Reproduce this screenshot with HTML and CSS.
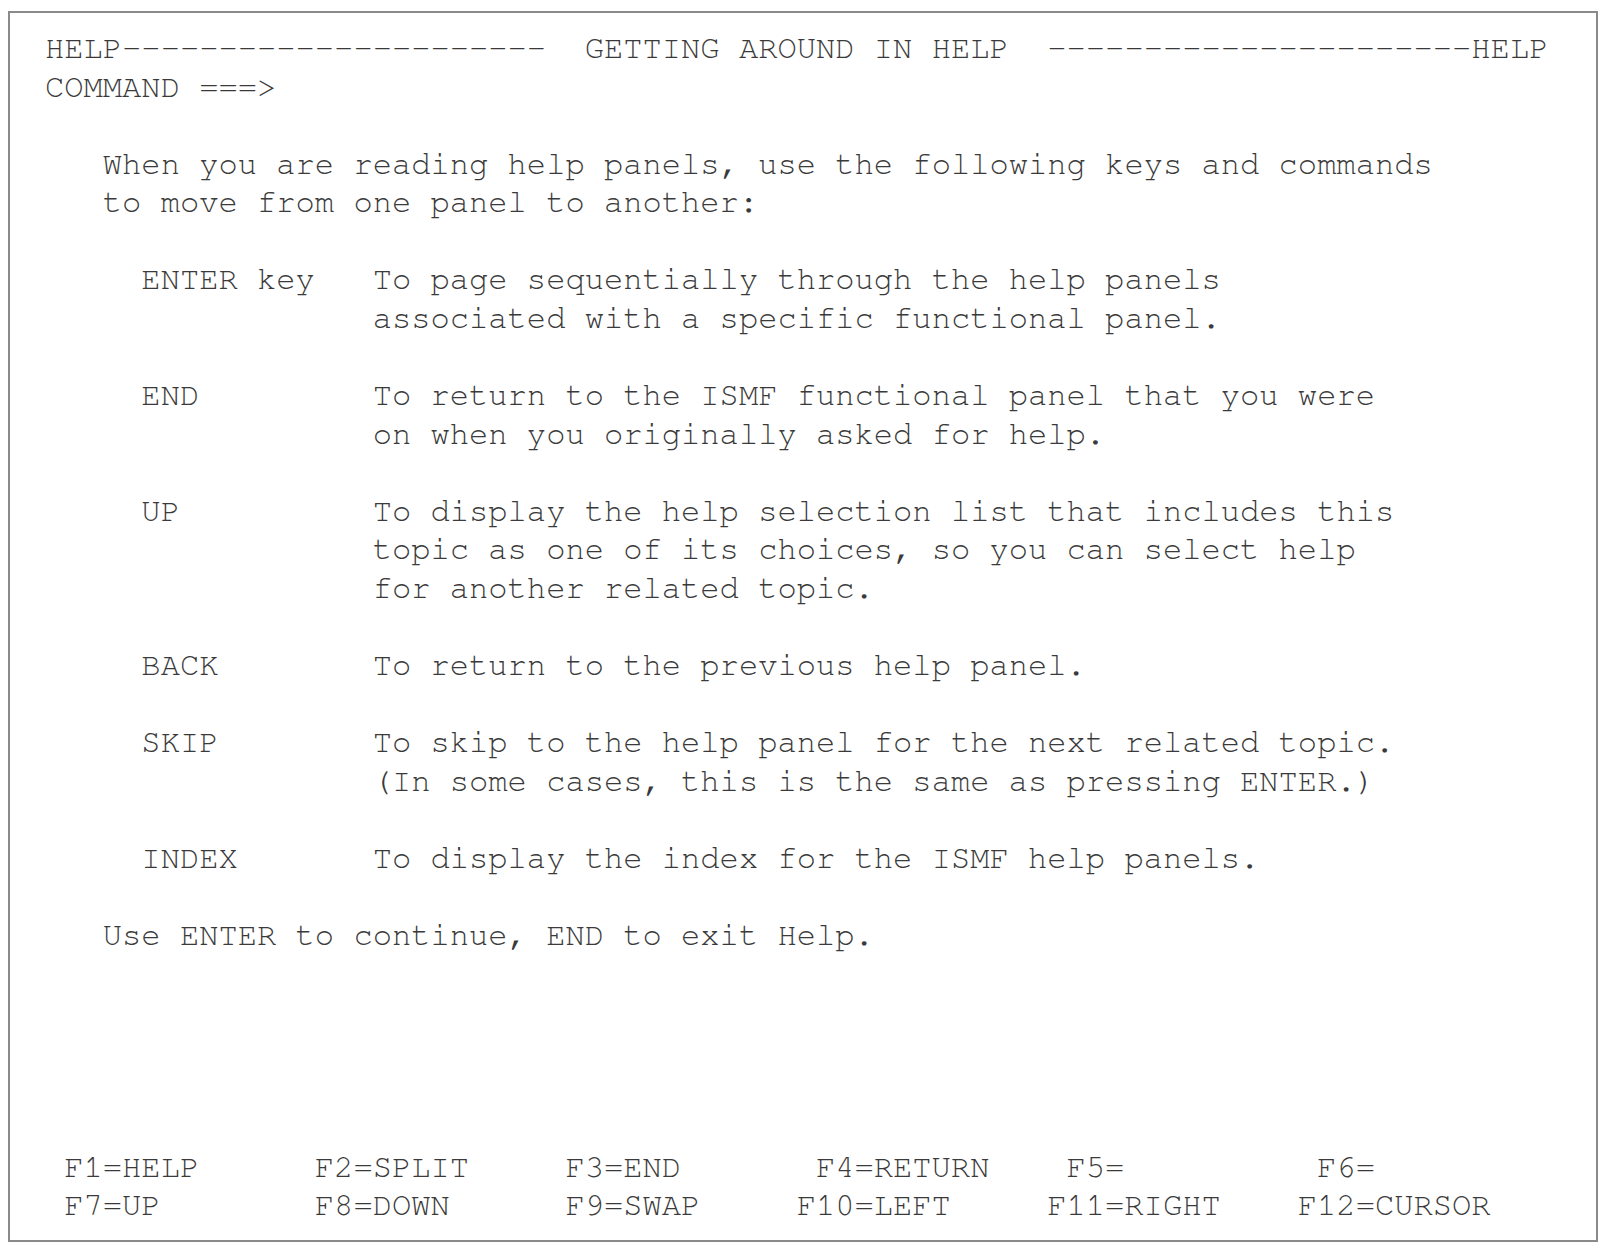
FILE: index.html
```html
<!DOCTYPE html>
<html lang="en">
<head>
<meta charset="utf-8">
<title>HELP - Getting Around in Help</title>
<link rel="stylesheet" href="styles.css">
</head>
<body>
<main class="screen">
  <div class="line">HELP----------------------  GETTING AROUND IN HELP  ----------------------HELP</div>
  <div class="line">COMMAND ===&gt;</div>
  <p class="intro">When you are reading help panels, use the following keys and commands<br>to move from one panel to another:</p>
  <dl class="keys">
    <div class="entry"><dt>ENTER key</dt><dd>To page sequentially through the help panels<br>associated with a specific functional panel.</dd></div>
    <div class="entry"><dt>END</dt><dd>To return to the ISMF functional panel that you were<br>on when you originally asked for help.</dd></div>
    <div class="entry"><dt>UP</dt><dd>To display the help selection list that includes this<br>topic as one of its choices, so you can select help<br>for another related topic.</dd></div>
    <div class="entry"><dt>BACK</dt><dd>To return to the previous help panel.</dd></div>
    <div class="entry"><dt>SKIP</dt><dd>To skip to the help panel for the next related topic.<br>(In some cases, this is the same as pressing ENTER.)</dd></div>
    <div class="entry"><dt>INDEX</dt><dd>To display the index for the ISMF help panels.</dd></div>
  </dl>
  <p class="intro note">Use ENTER to continue, END to exit Help.</p>
  <div class="fkeys">
    <div class="fk"><span class="k">F1</span>=HELP</div>
    <div class="fk"><span class="k">F2</span>=SPLIT</div>
    <div class="fk"><span class="k">F3</span>=END</div>
    <div class="fk"><span class="k">F4</span>=RETURN</div>
    <div class="fk"><span class="k">F5</span>=</div>
    <div class="fk"><span class="k">F6</span>=</div>
    <div class="fk"><span class="k">F7</span>=UP</div>
    <div class="fk"><span class="k">F8</span>=DOWN</div>
    <div class="fk"><span class="k">F9</span>=SWAP</div>
    <div class="fk"><span class="k">F10</span>=LEFT</div>
    <div class="fk"><span class="k">F11</span>=RIGHT</div>
    <div class="fk"><span class="k">F12</span>=CURSOR</div>
  </div>
</main>
</body>
</html>
```
FILE: styles.css
```css
:root {
  --lh: 38.56px;
}
html, body {
  margin: 0;
  padding: 0;
  background: #ffffff;
}
.screen {
  box-sizing: border-box;
  margin: 11px 0 0 8px;
  width: 1590px;
  height: 1231px;
  border: 2px solid #8a8a8a;
  padding: 16px 0 15px 35px;
  display: flex;
  flex-direction: column;
  font-family: "Nimbus Mono PS", "Nimbus Mono L", "FreeMono", "Courier", "Liberation Mono", monospace;
  font-size: 32.13px;
  line-height: var(--lh);
  color: #3a3a3a;
}
.line {
  white-space: pre;
  height: var(--lh);
}
.intro {
  margin: var(--lh) 0 0 0;
  padding-left: 3ch;
}
.keys {
  margin: var(--lh) 0 0 0;
  padding-left: 5ch;
  display: flex;
  flex-direction: column;
  gap: var(--lh);
}
.entry {
  display: grid;
  grid-template-columns: 12ch 1fr;
}
.entry dt, .entry dd {
  margin: 0;
}
.fkeys {
  margin-top: auto;
  display: grid;
  grid-template-columns: repeat(6, 13ch);
}
.fk {
  white-space: pre;
}
.k {
  display: inline-block;
  width: 3ch;
  text-align: right;
}
```
